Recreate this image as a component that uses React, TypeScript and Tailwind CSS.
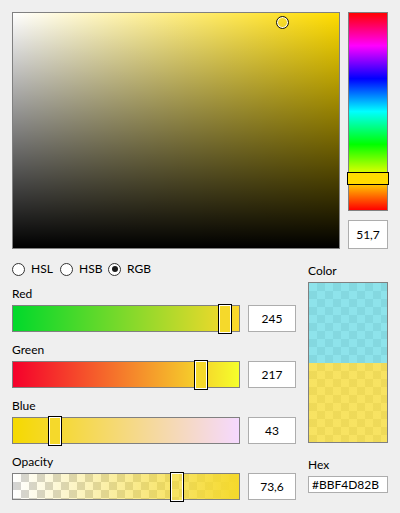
import React from 'react';

const channels = [
  {
    label: 'Red',
    value: '245',
    pos: 245 / 255,
    track: 'bg-[linear-gradient(to_right,#00d92b,#ffd92b)]',
    thumb: 'bg-[#f5d92b]',
  },
  {
    label: 'Green',
    value: '217',
    pos: 217 / 255,
    track: 'bg-[linear-gradient(to_right,#f5002b,#f5ff2b)]',
    thumb: 'bg-[#f5d92b]',
  },
  {
    label: 'Blue',
    value: '43',
    pos: 43 / 255,
    track: 'bg-[linear-gradient(to_right,#f5d900,#f5d9ff)]',
    thumb: 'bg-[#f5d92b]',
  },
  {
    label: 'Opacity',
    value: '73,6',
    pos: 0.736,
    track:
      'bg-[linear-gradient(to_right,rgba(245,217,43,0),rgb(245,217,43)),repeating-conic-gradient(#d4d4d4_0%_25%,#ffffff_0%_50%)] [background-size:100%_100%,16px_16px]',
    thumb:
      'bg-[linear-gradient(rgba(245,217,43,0.74),rgba(245,217,43,0.74)),repeating-conic-gradient(#d4d4d4_0%_25%,#ffffff_0%_50%)] [background-size:100%_100%,16px_16px]',
  },
];

function Radio({ label, checked }: { label: string; checked?: boolean }) {
  return (
    <div className="flex items-center w-12">
      <span className="w-[13px] h-[13px] rounded-full border border-[#333] bg-white flex items-center justify-center">
        {checked && <span className="w-[6px] h-[6px] rounded-full bg-[#1a1a1a]" />}
      </span>
      <span className="ml-[6px] leading-4">{label}</span>
    </div>
  );
}

export default function App() {
  return (
    <div className="w-[400px] h-[513px] bg-[#efefef] p-3 font-['Lato',sans-serif] text-[12px] text-black">
      {/* top: saturation/value area + hue strip */}
      <div className="flex gap-2">
        <div className="relative w-[328px] h-[237px] border border-[#808080] bg-[linear-gradient(to_top,#000,rgba(0,0,0,0)),linear-gradient(to_right,#fff,#ffdc00)]">
          <div className="absolute left-[263px] top-[3px] w-[13px] h-[13px] rounded-full border border-[#111] shadow-[inset_0_0_0_1px_#fff]" />
        </div>
        <div className="flex flex-col w-10">
          <div className="relative h-[199px] border border-[#808080] bg-[linear-gradient(to_bottom,#f00,#f0f,#00f,#0ff,#0f0,#ff0,#f00)]">
            <div className="absolute -left-[2px] -right-[2px] top-[159px] h-[13px] border-[1.5px] border-black bg-[#ffdc00]" />
          </div>
          <div className="mt-[9px] h-[29px] border border-[#adadad] bg-white flex items-center justify-center">
            51,7
          </div>
        </div>
      </div>

      {/* bottom: channel sliders + preview */}
      <div className="flex gap-3 mt-[9px]">
        <div className="w-[284px]">
          <div className="mt-[2px] h-[18px] flex items-center">
            <Radio label="HSL" />
            <Radio label="HSB" />
            <Radio label="RGB" checked />
          </div>
          <div className="mt-[7px] flex flex-col gap-[9px]">
            {channels.map((c) => (
              <div key={c.label}>
                <div className="h-4 leading-4 pt-[1px]">{c.label}</div>
                <div className="mt-1 flex gap-2">
                  <div className={`relative w-[228px] h-[27px] border border-[#808080] ${c.track}`}>
                    <div
                      className={`absolute top-[-2px] w-[14px] h-[30px] border border-black shadow-[inset_0_0_0_1px_#fff] ${c.thumb}`}
                      style={{ left: Math.round(c.pos * 214) - 1 }}
                    />
                  </div>
                  <div className="w-12 h-[27px] border border-[#adadad] bg-white flex items-center justify-center">
                    {c.value}
                  </div>
                </div>
              </div>
            ))}
          </div>
        </div>

        <div className="w-20">
          <div className="mt-1 h-4 leading-4 pt-[1px]">Color</div>
          <div className="mt-1 h-[161px] border border-[#808080] flex flex-col">
            <div className="h-[80px] bg-[repeating-conic-gradient(#84d8e0_0%_25%,#8ee3eb_0%_50%)] [background-size:16px_16px]" />
            <div className="flex-1 bg-[linear-gradient(rgba(245,217,43,0.74),rgba(245,217,43,0.74)),repeating-conic-gradient(#dcdcdc_0%_25%,#ffffff_0%_50%)] [background-size:100%_100%,16px_16px]" />
          </div>
          <div className="mt-[13px] h-4 leading-4 pt-[1px]">Hex</div>
          <div className="mt-1 h-[17px] border border-[#adadad] bg-white pl-[3px] leading-[15px]">
            #BBF4D82B
          </div>
        </div>
      </div>
    </div>
  );
}
